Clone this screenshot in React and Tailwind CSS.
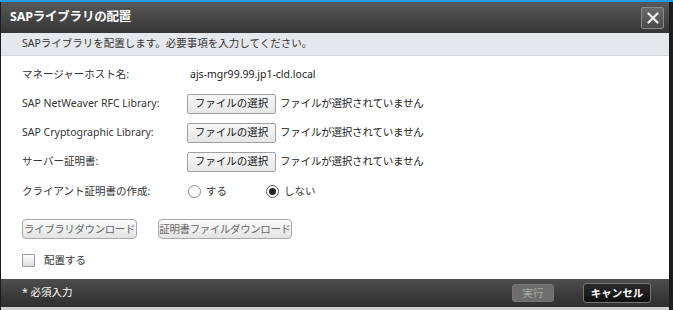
export default function App() {
  const font = { fontFamily: '"Noto Sans", "Noto Sans CJK JP", sans-serif' };

  const FileRow = ({ label }) => (
    <div className="flex items-center h-[29px]">
      <div className="w-[165px] shrink-0">{label}</div>
      <button className="h-[20px] w-[89px] border border-[#a0a0a0] rounded-[2px] bg-gradient-to-b from-[#f7f7f7] to-[#e6e6e6] text-[#111] text-[10.5px] leading-none whitespace-nowrap">
        ファイルの選択
      </button>
      <span className="ml-[4px] text-[#222] tracking-[-0.2px]">ファイルが選択されていません</span>
    </div>
  );

  return (
    <div
      className="w-[673px] h-[310px] bg-white flex flex-col overflow-hidden text-[10.5px] text-[#333]"
      style={font}
    >
      <div className="h-[2px] bg-[#1e9cf0] shrink-0" />
      <div className="flex-1 flex flex-col border-l border-r-[4px] border-[#1c1c1c]">
        {/* title */}
        <div className="h-[31px] shrink-0 flex items-center justify-between pl-[9px] pr-[5px] bg-gradient-to-b from-[#585858] to-[#363636]">
          <span className="text-white font-bold text-[12.5px] tracking-[-0.2px]">SAPライブラリの配置</span>
          <button className="w-[23px] h-[22px] flex items-center justify-center rounded-[2px] border border-[#8a8a8a] bg-gradient-to-b from-[#6a6a6a] to-[#4a4a4a]">
            <svg width="12" height="12" viewBox="0 0 12 12">
              <path d="M1.5 1.5 L10.5 10.5 M10.5 1.5 L1.5 10.5" stroke="#f2f2f2" strokeWidth="2.2" strokeLinecap="round" />
            </svg>
          </button>
        </div>

        {/* description */}
        <div className="h-[23px] shrink-0 flex items-center pl-[21px] bg-[#e5e7eb] border-b border-[#d4d6da] text-[#333]">
          SAPライブラリを配置します。必要事項を入力してください。
        </div>

        {/* form */}
        <div className="flex-1 flex flex-col pl-[21px] pt-[4px]">
          <div className="flex items-center h-[29px]">
            <div className="w-[168px] shrink-0">マネージャーホスト名:</div>
            <span className="text-[#222]">ajs-mgr99.99.jp1-cld.local</span>
          </div>
          <FileRow label="SAP NetWeaver RFC Library:" />
          <FileRow label="SAP Cryptographic Library:" />
          <FileRow label="サーバー証明書:" />
          <div className="flex items-center h-[31px]">
            <div className="w-[166px] shrink-0">クライアント証明書の作成:</div>
            <label className="flex items-center w-[78px]">
              <span className="w-[13px] h-[13px] rounded-full border border-[#8a8a8a] bg-white" />
              <span className="ml-[5px]">する</span>
            </label>
            <label className="flex items-center">
              <span className="w-[13px] h-[13px] rounded-full border border-[#555] bg-white flex items-center justify-center">
                <span className="w-[7px] h-[7px] rounded-full bg-[#222]" />
              </span>
              <span className="ml-[5px]">しない</span>
            </label>
          </div>

          <div className="flex items-center gap-[21px] mt-[12px]">
            <button className="h-[20px] w-[115px] px-0 border border-[#a8a8a8] rounded-[4px] bg-gradient-to-b from-[#fbfbfb] to-[#e3e3e3] text-[#666] text-[10.5px] leading-none whitespace-nowrap tracking-[-0.4px]">
              ライブラリダウンロード
            </button>
            <button className="h-[20px] w-[134px] px-0 border border-[#a8a8a8] rounded-[4px] bg-gradient-to-b from-[#fbfbfb] to-[#e3e3e3] text-[#666] text-[10.5px] leading-none whitespace-nowrap tracking-[-0.4px]">
              証明書ファイルダウンロード
            </button>
          </div>

          <div className="flex items-center mt-[14px]">
            <span className="w-[13px] h-[13px] border border-[#9a9a9a] rounded-[1px] bg-gradient-to-b from-[#ffffff] to-[#dcdcdc]" />
            <span className="ml-[9px]">配置する</span>
          </div>
        </div>

        {/* footer */}
        <div className="h-[28px] shrink-0 flex items-center justify-between pl-[21px] pr-[18px] bg-gradient-to-b from-[#4e4e4e] to-[#2e2e2e]">
          <span className="text-white text-[10.5px]">* 必須入力</span>
          <div className="flex items-center gap-[29px]">
            <button className="h-[18px] w-[42px] rounded-[3px] bg-[#6e6e6e] border border-[#777] text-[#a8a8a8] text-[10.5px] leading-none">
              実行
            </button>
            <button className="h-[20px] w-[68px] rounded-[3px] bg-gradient-to-b from-[#2a2a2a] to-[#111] border border-[#777] text-white font-bold text-[10.5px] leading-none whitespace-nowrap">
              キャンセル
            </button>
          </div>
        </div>
        <div className="h-[3px] shrink-0 bg-[#cfcfcf]" />
      </div>
    </div>
  );
}
